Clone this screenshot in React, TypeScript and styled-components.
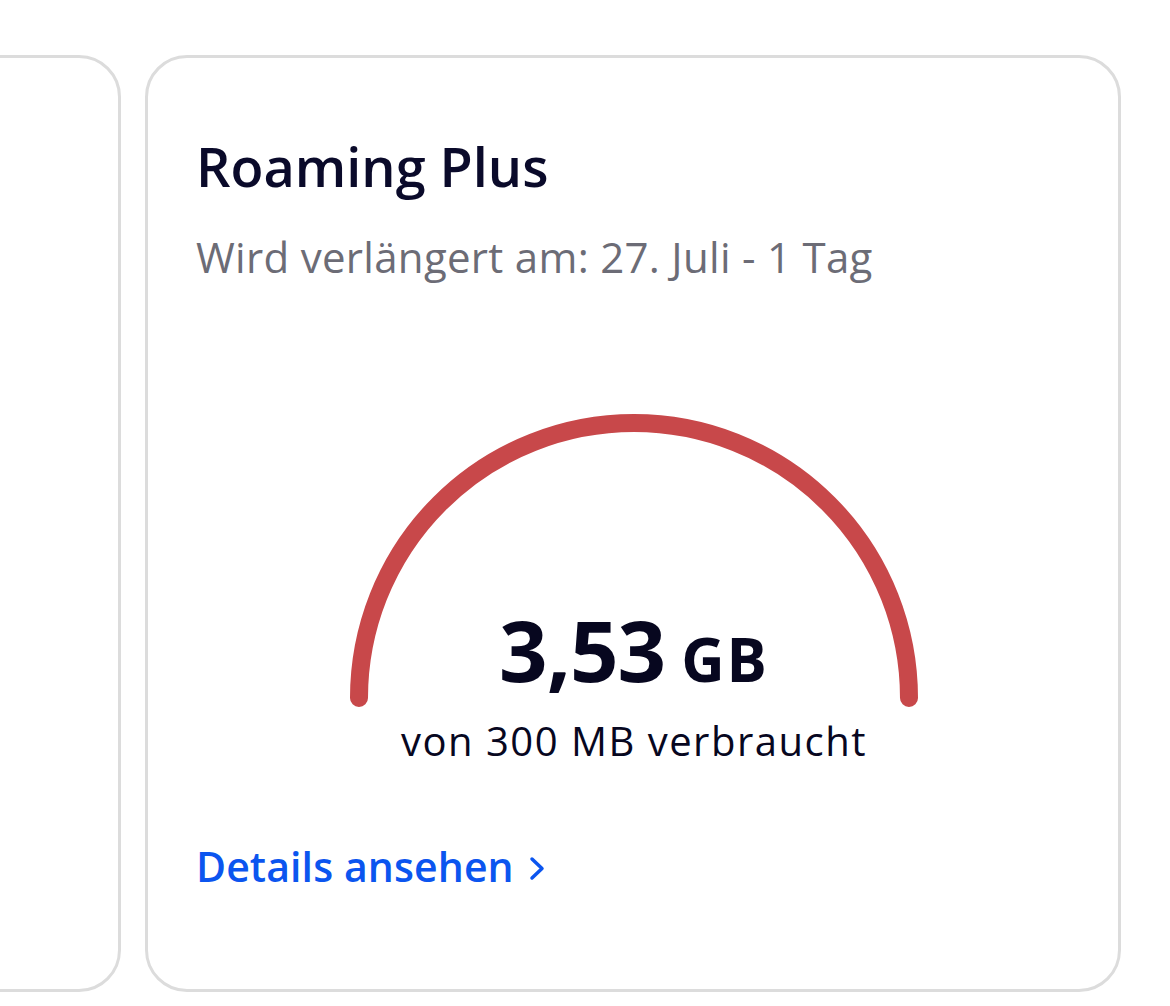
import React from "react";
import styled, { createGlobalStyle } from "styled-components";

const GlobalStyle = createGlobalStyle`
  html, body {
    margin: 0;
    padding: 0;
    background: #ffffff;
  }
  body {
    font-family: "Open Sans", "Noto Sans", sans-serif;
    -webkit-font-smoothing: antialiased;
  }
`;

const CARD_WIDTH = 976;
const CARD_GAP = 24;
const FIRST_LEFT = 145;

const Viewport = styled.main`
  width: 100%;
  overflow: hidden;
  padding-top: 55px;
  height: 1006px;
  box-sizing: border-box;
`;

const Track = styled.div<{ $offset: number }>`
  display: flex;
  gap: ${CARD_GAP}px;
  transform: translateX(${(p) => p.$offset}px);
`;

const Card = styled.section`
  flex: 0 0 ${CARD_WIDTH}px;
  height: 937px;
  box-sizing: border-box;
  border: 3px solid #dcdcdc;
  border-radius: 42px;
  background: #fff;
  padding: 77px 46px 0 48px;
  display: flex;
  flex-direction: column;
`;

const Title = styled.h2`
  margin: 0;
  font-size: 54px;
  line-height: 62px;
  font-weight: 600;
  color: #0a0a2a;
`;

const Renewal = styled.p`
  margin: 35px 0 0 0;
  font-size: 42px;
  line-height: 50px;
  font-weight: 400;
  letter-spacing: 0.3px;
  color: #6c6c76;
`;

const Gauge = styled.div`
  margin-top: 132px;
  display: flex;
  flex-direction: column;
  align-items: center;
`;

const Arc = styled.svg`
  display: block;
  width: 568px;
  height: 294px;
`;

const Amount = styled.div`
  margin-top: -101px;
  line-height: 85px;
  height: 85px;
  color: #07071f;
  font-weight: 700;
  white-space: nowrap;
`;

const Value = styled.span`
  font-size: 85px;
  letter-spacing: -1px;
`;

const Unit = styled.span`
  font-size: 60px;
  letter-spacing: 2px;
  margin-left: 16px;
`;

const Usage = styled.div`
  margin-top: 27px;
  font-size: 40px;
  line-height: 44px;
  letter-spacing: 1.5px;
  color: #07071f;
`;

const DetailsLink = styled.a`
  margin-top: 78px;
  display: inline-flex;
  align-items: center;
  gap: 15px;
  align-self: flex-start;
  font-size: 41px;
  line-height: 50px;
  font-weight: 600;
  letter-spacing: 0.1px;
  color: #0b55ef;
  text-decoration: none;
  cursor: pointer;
`;

const Chevron = styled.svg`
  width: 16px;
  height: 25px;
  margin-top: 4px;
`;

const UsageGauge: React.FC<{ ratio: number }> = ({ ratio }) => {
  const r = 275;
  const cx = 284;
  const cy = 284;
  const len = Math.PI * r;
  return (
    <Arc viewBox="0 0 568 294">
      <path
        d={`M ${cx - r} ${cy} A ${r} ${r} 0 0 1 ${cx + r} ${cy}`}
        fill="none"
        stroke="#c8484a"
        strokeWidth={18}
        strokeLinecap="round"
        strokeDasharray={`${len * Math.min(ratio, 1)} ${len}`}
      />
    </Arc>
  );
};

const App: React.FC = () => {
  const active = 1;
  const offset = FIRST_LEFT - active * (CARD_WIDTH + CARD_GAP);

  return (
    <>
      <GlobalStyle />
      <Viewport>
        <Track $offset={offset}>
          <Card />
          <Card>
            <Title>Roaming Plus</Title>
            <Renewal>Wird verlängert am: 27. Juli - 1 Tag</Renewal>
            <Gauge>
              <UsageGauge ratio={3530 / 300} />
              <Amount>
                <Value>3,53</Value>
                <Unit>GB</Unit>
              </Amount>
              <Usage>von 300 MB verbraucht</Usage>
            </Gauge>
            <DetailsLink>
              Details ansehen
              <Chevron viewBox="0 0 16 25">
                <polyline
                  points="3,3 13,12.5 3,22"
                  fill="none"
                  stroke="currentColor"
                  strokeWidth={3.5}
                  strokeLinecap="round"
                  strokeLinejoin="round"
                />
              </Chevron>
            </DetailsLink>
          </Card>
        </Track>
      </Viewport>
    </>
  );
};

export default App;
